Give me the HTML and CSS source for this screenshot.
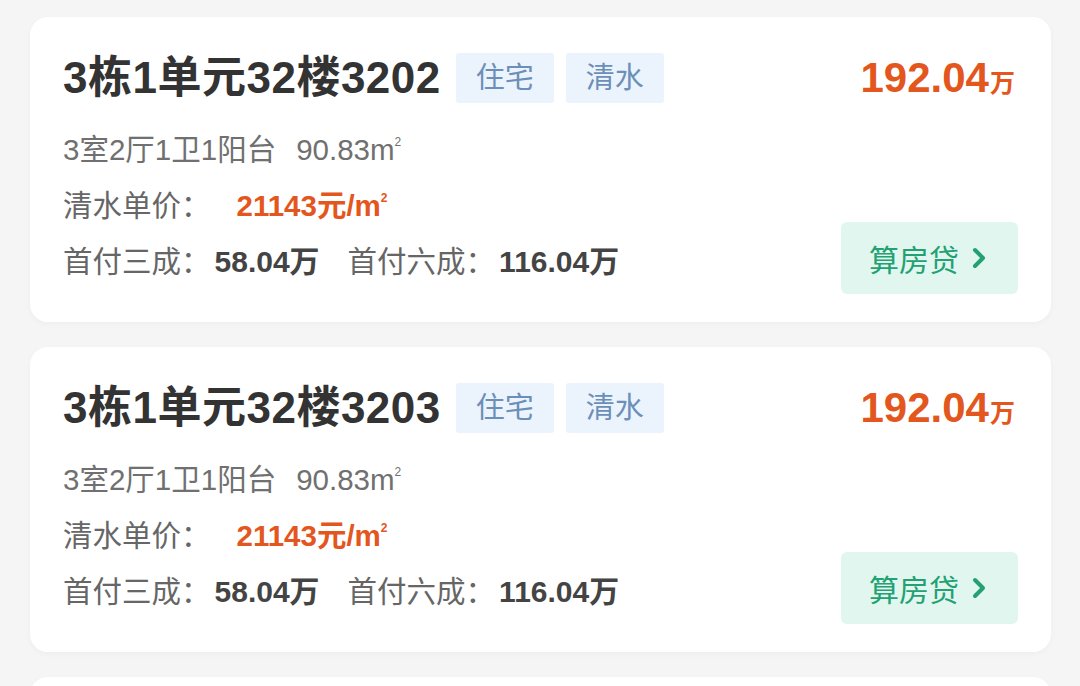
FILE: index.html
```html
<!DOCTYPE html>
<html>
<head>
    <title>房源列表</title>
    <link rel="stylesheet" href="styles.css">
</head>
<body>
    <div class="list">
        <div class="house-card">
            <div class="house-main">
                <div class="title-row">
                    <span class="house-title">3栋1单元32楼3202</span>
                    <span class="tag">住宅</span>
                    <span class="tag">清水</span>
                </div>
                <div class="info-line light">3室2厅1卫1阳台<span class="area">90.83m<sup class="sq">2</sup></span></div>
                <div class="info-line">清水单价：<span class="unit-price">21143元/m<sup class="sq">2</sup></span></div>
                <div class="info-line">首付三成：<b class="pay">58.04万</b><span class="gap"></span>首付六成：<b class="pay">116.04万</b></div>
            </div>
            <div class="house-side">
                <div class="total">192.04<span class="wan">万</span></div>
                <button class="loan-btn">算房贷
                    <svg width="16" height="24" viewBox="0 0 16 24"><path d="M4 4 L12 12 L4 20" fill="none" stroke="#23a173" stroke-width="4" stroke-linecap="round" stroke-linejoin="round"/></svg>
                </button>
            </div>
        </div>

        <div class="house-card">
            <div class="house-main">
                <div class="title-row">
                    <span class="house-title">3栋1单元32楼3203</span>
                    <span class="tag">住宅</span>
                    <span class="tag">清水</span>
                </div>
                <div class="info-line light">3室2厅1卫1阳台<span class="area">90.83m<sup class="sq">2</sup></span></div>
                <div class="info-line">清水单价：<span class="unit-price">21143元/m<sup class="sq">2</sup></span></div>
                <div class="info-line">首付三成：<b class="pay">58.04万</b><span class="gap"></span>首付六成：<b class="pay">116.04万</b></div>
            </div>
            <div class="house-side">
                <div class="total">192.04<span class="wan">万</span></div>
                <button class="loan-btn">算房贷
                    <svg width="16" height="24" viewBox="0 0 16 24"><path d="M4 4 L12 12 L4 20" fill="none" stroke="#23a173" stroke-width="4" stroke-linecap="round" stroke-linejoin="round"/></svg>
                </button>
            </div>
        </div>

        <div class="house-card next-card"></div>
    </div>
</body>
</html>
```

FILE: styles.css
```css
body, html {
    margin: 0;
    background-color: #f5f5f5;
    font-family: "Liberation Sans", "Noto Sans CJK SC", sans-serif;
    overflow: hidden;
}

.list {
    padding: 17px 29px 0 30px;
}

.house-card {
    display: flex;
    justify-content: space-between;
    background: #fff;
    border-radius: 18px;
    padding: 36px 33px 32px 33px;
    margin-bottom: 25px;
    box-shadow: 0 2px 6px rgba(0, 0, 0, 0.03);
}

.next-card {
    height: 240px;
}

.title-row {
    display: flex;
    align-items: center;
    height: 50px;
    margin-bottom: 19px;
}

.house-title {
    font-size: 44px;
    font-weight: bold;
    color: #333;
    line-height: 50px;
    letter-spacing: 0.5px;
    margin-right: 15px;
}

.tag {
    height: 50px;
    line-height: 50px;
    padding: 0 20px;
    margin-right: 12px;
    font-size: 29px;
    color: #6b8fb8;
    background-color: #ebf3fc;
    border-radius: 3px;
}

.info-line {
    font-size: 29.5px;
    line-height: 56px;
    color: #666;
}

.info-line.light {
    color: #707070;
}

.area {
    margin-left: 20px;
}

.sq {
    font-size: 12px;
    vertical-align: 14px;
    line-height: 0;
}

.unit-price {
    color: #e3561d;
    font-weight: bold;
    margin-left: 26px;
}

.pay {
    color: #444;
    font-size: 30px;
    margin-left: 4px;
}

.gap {
    display: inline-block;
    width: 28px;
}

.house-side {
    display: flex;
    flex-direction: column;
    justify-content: space-between;
    align-items: flex-end;
    margin-bottom: -4px;
}

.total {
    color: #e3561d;
    font-size: 42px;
    font-weight: bold;
    line-height: 50px;
    margin-right: 3px;
}

.wan {
    font-size: 25px;
    margin-left: 1px;
}

.loan-btn {
    display: flex;
    align-items: center;
    gap: 12px;
    width: 177px;
    height: 72px;
    padding: 0 0 0 28px;
    border: none;
    border-radius: 6px;
    background-color: #e0f6ef;
    color: #23a173;
    font-family: inherit;
    font-size: 30px;
    cursor: pointer;
}
```
